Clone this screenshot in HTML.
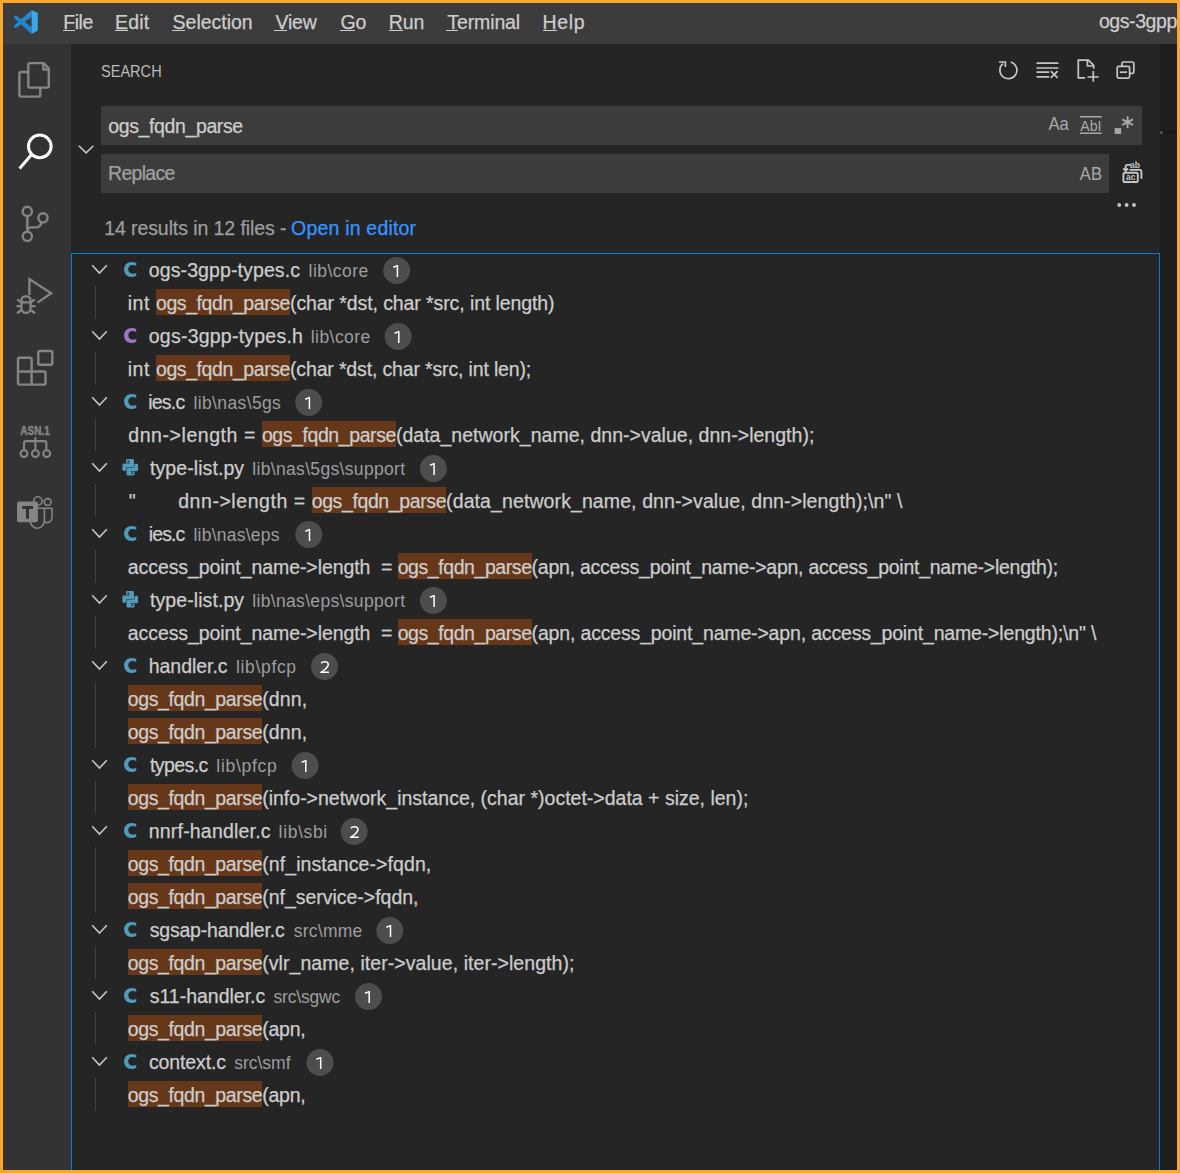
<!DOCTYPE html>
<html><head><meta charset="utf-8"><style>
html,body{margin:0;padding:0}
body{width:1180px;height:1173px;overflow:hidden;position:relative;background:#252526;font-family:'Liberation Sans', sans-serif}
.t{position:absolute;white-space:pre;line-height:normal;-webkit-text-stroke:0.25px currentColor}
u{text-decoration:none;border-bottom:0}
</style></head><body>
<!-- title bar -->
<div style="position:absolute;left:0;top:0;width:1180px;height:44px;background:#3c3c3c"></div>
<!-- activity bar -->
<div style="position:absolute;left:0;top:44px;width:71px;height:1129px;background:#333333"></div>
<!-- editor strip -->
<div style="position:absolute;left:1160px;top:44px;width:20px;height:1129px;background:#1e1e1e"></div>
<div style="position:absolute;left:1160px;top:130px;width:20px;height:4px;background:#191919"></div><div style="position:absolute;left:1160px;top:131px;width:3px;height:3px;background:#4a4a4a"></div>
<!-- inputs -->
<div style="position:absolute;left:101px;top:106px;width:1041px;height:39px;background:#3c3c3c"></div>
<div style="position:absolute;left:101px;top:154px;width:1008px;height:39px;background:#3c3c3c"></div>
<!-- tree focus border -->
<div style="position:absolute;left:71px;top:253px;width:1087px;height:1000px;border:1px solid #007fd4"></div>
<div style="position:absolute;left:156px;top:289px;width:134px;height:26px;background:#663819"></div><div style="position:absolute;left:156px;top:355px;width:134px;height:26px;background:#663819"></div><div style="position:absolute;left:262px;top:421px;width:134px;height:26px;background:#663819"></div><div style="position:absolute;left:312px;top:487px;width:134px;height:26px;background:#663819"></div><div style="position:absolute;left:398px;top:553px;width:134px;height:26px;background:#663819"></div><div style="position:absolute;left:398px;top:619px;width:134px;height:26px;background:#663819"></div><div style="position:absolute;left:128px;top:685px;width:134px;height:26px;background:#663819"></div><div style="position:absolute;left:128px;top:718px;width:134px;height:26px;background:#663819"></div><div style="position:absolute;left:128px;top:784px;width:134px;height:26px;background:#663819"></div><div style="position:absolute;left:128px;top:850px;width:134px;height:26px;background:#663819"></div><div style="position:absolute;left:128px;top:883px;width:134px;height:26px;background:#663819"></div><div style="position:absolute;left:128px;top:949px;width:134px;height:26px;background:#663819"></div><div style="position:absolute;left:128px;top:1015px;width:134px;height:26px;background:#663819"></div><div style="position:absolute;left:128px;top:1081px;width:134px;height:26px;background:#663819"></div>
<div style="position:absolute;left:95px;top:286px;width:1px;height:33px;background:#404040"></div><div style="position:absolute;left:95px;top:352px;width:1px;height:33px;background:#404040"></div><div style="position:absolute;left:95px;top:418px;width:1px;height:33px;background:#404040"></div><div style="position:absolute;left:95px;top:484px;width:1px;height:33px;background:#404040"></div><div style="position:absolute;left:95px;top:550px;width:1px;height:33px;background:#404040"></div><div style="position:absolute;left:95px;top:616px;width:1px;height:33px;background:#404040"></div><div style="position:absolute;left:95px;top:682px;width:1px;height:33px;background:#404040"></div><div style="position:absolute;left:95px;top:715px;width:1px;height:33px;background:#404040"></div><div style="position:absolute;left:95px;top:781px;width:1px;height:33px;background:#404040"></div><div style="position:absolute;left:95px;top:847px;width:1px;height:33px;background:#404040"></div><div style="position:absolute;left:95px;top:880px;width:1px;height:33px;background:#404040"></div><div style="position:absolute;left:95px;top:946px;width:1px;height:33px;background:#404040"></div><div style="position:absolute;left:95px;top:1012px;width:1px;height:33px;background:#404040"></div><div style="position:absolute;left:95px;top:1078px;width:1px;height:33px;background:#404040"></div>
<svg width="1180" height="1173" style="position:absolute;left:0;top:0">
<g fill="none" stroke="#c5c5c5" stroke-width="1.6"><path d="M92.2 265.2 L99.5 273.1 L106.8 265.2" /></g><path transform="translate(0,0)" fill="#519aba" d="M136.2,263.1 C134.8,262.3 133.3,261.96 131.7,261.96 C127.2,261.96 124.05,265 124.05,269.5 C124.05,274 127.2,277 131.7,277 C133.3,277 134.8,276.6 136.2,275.8 L136.2,273 C135.1,273.5 133.9,273.7 132.6,273.7 C130,273.7 128.2,272 128.2,269.3 C128.2,266.6 130,264.9 132.6,264.9 C133.9,264.9 135.1,265.3 136.2,266 Z"/><circle cx="396.7" cy="270.5" r="13.5" fill="#4d4d4d"/><g fill="none" stroke="#c5c5c5" stroke-width="1.6"><path d="M92.2 331.2 L99.5 339.1 L106.8 331.2" /></g><path transform="translate(0,66)" fill="#a074c4" d="M136.2,263.1 C134.8,262.3 133.3,261.96 131.7,261.96 C127.2,261.96 124.05,265 124.05,269.5 C124.05,274 127.2,277 131.7,277 C133.3,277 134.8,276.6 136.2,275.8 L136.2,273 C135.1,273.5 133.9,273.7 132.6,273.7 C130,273.7 128.2,272 128.2,269.3 C128.2,266.6 130,264.9 132.6,264.9 C133.9,264.9 135.1,265.3 136.2,266 Z"/><circle cx="398.1" cy="336.5" r="13.5" fill="#4d4d4d"/><g fill="none" stroke="#c5c5c5" stroke-width="1.6"><path d="M92.2 397.2 L99.5 405.1 L106.8 397.2" /></g><path transform="translate(0,132)" fill="#519aba" d="M136.2,263.1 C134.8,262.3 133.3,261.96 131.7,261.96 C127.2,261.96 124.05,265 124.05,269.5 C124.05,274 127.2,277 131.7,277 C133.3,277 134.8,276.6 136.2,275.8 L136.2,273 C135.1,273.5 133.9,273.7 132.6,273.7 C130,273.7 128.2,272 128.2,269.3 C128.2,266.6 130,264.9 132.6,264.9 C133.9,264.9 135.1,265.3 136.2,266 Z"/><circle cx="308.7" cy="402.5" r="13.5" fill="#4d4d4d"/><g fill="none" stroke="#c5c5c5" stroke-width="1.6"><path d="M92.2 463.2 L99.5 471.1 L106.8 463.2" /></g><g transform="translate(122.4,459.1)"><path fill="#519aba" d="M3.6,1.3 Q3.6,0 4.9,0 L10.3,0 Q11.6,0 11.6,1.3 L11.6,7.9 L5.0,7.9 Q3.6,7.9 3.6,9.3 L3.6,10.5 Q3.6,11.8 2.3,11.8 L1.3,11.8 Q0,11.8 0,10.5 L0,5.65 Q0,4.35 1.3,4.35 L3.6,4.35 Z"/><path fill="#519aba" d="M3.6,1.3 Q3.6,0 4.9,0 L10.3,0 Q11.6,0 11.6,1.3 L11.6,7.9 L5.0,7.9 Q3.6,7.9 3.6,9.3 L3.6,10.5 Q3.6,11.8 2.3,11.8 L1.3,11.8 Q0,11.8 0,10.5 L0,5.65 Q0,4.35 1.3,4.35 L3.6,4.35 Z" transform="rotate(180 7.85 8.2)"/><path d="M3.2,4.1 H7.6 M8.1,12.3 H12.5" stroke="#252526" stroke-width="0.6"/><circle cx="5.9" cy="2.3" r="0.85" fill="#252526"/><circle cx="9.8" cy="14.1" r="0.85" fill="#252526"/></g><circle cx="433.4" cy="468.5" r="13.5" fill="#4d4d4d"/><g fill="none" stroke="#c5c5c5" stroke-width="1.6"><path d="M92.2 529.2 L99.5 537.1 L106.8 529.2" /></g><path transform="translate(0,264)" fill="#519aba" d="M136.2,263.1 C134.8,262.3 133.3,261.96 131.7,261.96 C127.2,261.96 124.05,265 124.05,269.5 C124.05,274 127.2,277 131.7,277 C133.3,277 134.8,276.6 136.2,275.8 L136.2,273 C135.1,273.5 133.9,273.7 132.6,273.7 C130,273.7 128.2,272 128.2,269.3 C128.2,266.6 130,264.9 132.6,264.9 C133.9,264.9 135.1,265.3 136.2,266 Z"/><circle cx="308.8" cy="534.5" r="13.5" fill="#4d4d4d"/><g fill="none" stroke="#c5c5c5" stroke-width="1.6"><path d="M92.2 595.2 L99.5 603.1 L106.8 595.2" /></g><g transform="translate(122.4,591.1)"><path fill="#519aba" d="M3.6,1.3 Q3.6,0 4.9,0 L10.3,0 Q11.6,0 11.6,1.3 L11.6,7.9 L5.0,7.9 Q3.6,7.9 3.6,9.3 L3.6,10.5 Q3.6,11.8 2.3,11.8 L1.3,11.8 Q0,11.8 0,10.5 L0,5.65 Q0,4.35 1.3,4.35 L3.6,4.35 Z"/><path fill="#519aba" d="M3.6,1.3 Q3.6,0 4.9,0 L10.3,0 Q11.6,0 11.6,1.3 L11.6,7.9 L5.0,7.9 Q3.6,7.9 3.6,9.3 L3.6,10.5 Q3.6,11.8 2.3,11.8 L1.3,11.8 Q0,11.8 0,10.5 L0,5.65 Q0,4.35 1.3,4.35 L3.6,4.35 Z" transform="rotate(180 7.85 8.2)"/><path d="M3.2,4.1 H7.6 M8.1,12.3 H12.5" stroke="#252526" stroke-width="0.6"/><circle cx="5.9" cy="2.3" r="0.85" fill="#252526"/><circle cx="9.8" cy="14.1" r="0.85" fill="#252526"/></g><circle cx="433.4" cy="600.5" r="13.5" fill="#4d4d4d"/><g fill="none" stroke="#c5c5c5" stroke-width="1.6"><path d="M92.2 661.2 L99.5 669.1 L106.8 661.2" /></g><path transform="translate(0,396)" fill="#519aba" d="M136.2,263.1 C134.8,262.3 133.3,261.96 131.7,261.96 C127.2,261.96 124.05,265 124.05,269.5 C124.05,274 127.2,277 131.7,277 C133.3,277 134.8,276.6 136.2,275.8 L136.2,273 C135.1,273.5 133.9,273.7 132.6,273.7 C130,273.7 128.2,272 128.2,269.3 C128.2,266.6 130,264.9 132.6,264.9 C133.9,264.9 135.1,265.3 136.2,266 Z"/><circle cx="324.5" cy="666.5" r="13.5" fill="#4d4d4d"/><g fill="none" stroke="#c5c5c5" stroke-width="1.6"><path d="M92.2 760.2 L99.5 768.1 L106.8 760.2" /></g><path transform="translate(0,495)" fill="#519aba" d="M136.2,263.1 C134.8,262.3 133.3,261.96 131.7,261.96 C127.2,261.96 124.05,265 124.05,269.5 C124.05,274 127.2,277 131.7,277 C133.3,277 134.8,276.6 136.2,275.8 L136.2,273 C135.1,273.5 133.9,273.7 132.6,273.7 C130,273.7 128.2,272 128.2,269.3 C128.2,266.6 130,264.9 132.6,264.9 C133.9,264.9 135.1,265.3 136.2,266 Z"/><circle cx="305.1" cy="765.5" r="13.5" fill="#4d4d4d"/><g fill="none" stroke="#c5c5c5" stroke-width="1.6"><path d="M92.2 826.2 L99.5 834.1 L106.8 826.2" /></g><path transform="translate(0,561)" fill="#519aba" d="M136.2,263.1 C134.8,262.3 133.3,261.96 131.7,261.96 C127.2,261.96 124.05,265 124.05,269.5 C124.05,274 127.2,277 131.7,277 C133.3,277 134.8,276.6 136.2,275.8 L136.2,273 C135.1,273.5 133.9,273.7 132.6,273.7 C130,273.7 128.2,272 128.2,269.3 C128.2,266.6 130,264.9 132.6,264.9 C133.9,264.9 135.1,265.3 136.2,266 Z"/><circle cx="354.2" cy="831.5" r="13.5" fill="#4d4d4d"/><g fill="none" stroke="#c5c5c5" stroke-width="1.6"><path d="M92.2 925.2 L99.5 933.1 L106.8 925.2" /></g><path transform="translate(0,660)" fill="#519aba" d="M136.2,263.1 C134.8,262.3 133.3,261.96 131.7,261.96 C127.2,261.96 124.05,265 124.05,269.5 C124.05,274 127.2,277 131.7,277 C133.3,277 134.8,276.6 136.2,275.8 L136.2,273 C135.1,273.5 133.9,273.7 132.6,273.7 C130,273.7 128.2,272 128.2,269.3 C128.2,266.6 130,264.9 132.6,264.9 C133.9,264.9 135.1,265.3 136.2,266 Z"/><circle cx="389.8" cy="930.5" r="13.5" fill="#4d4d4d"/><g fill="none" stroke="#c5c5c5" stroke-width="1.6"><path d="M92.2 991.2 L99.5 999.1 L106.8 991.2" /></g><path transform="translate(0,726)" fill="#519aba" d="M136.2,263.1 C134.8,262.3 133.3,261.96 131.7,261.96 C127.2,261.96 124.05,265 124.05,269.5 C124.05,274 127.2,277 131.7,277 C133.3,277 134.8,276.6 136.2,275.8 L136.2,273 C135.1,273.5 133.9,273.7 132.6,273.7 C130,273.7 128.2,272 128.2,269.3 C128.2,266.6 130,264.9 132.6,264.9 C133.9,264.9 135.1,265.3 136.2,266 Z"/><circle cx="368.5" cy="996.5" r="13.5" fill="#4d4d4d"/><g fill="none" stroke="#c5c5c5" stroke-width="1.6"><path d="M92.2 1057.2 L99.5 1065.1 L106.8 1057.2" /></g><path transform="translate(0,792)" fill="#519aba" d="M136.2,263.1 C134.8,262.3 133.3,261.96 131.7,261.96 C127.2,261.96 124.05,265 124.05,269.5 C124.05,274 127.2,277 131.7,277 C133.3,277 134.8,276.6 136.2,275.8 L136.2,273 C135.1,273.5 133.9,273.7 132.6,273.7 C130,273.7 128.2,272 128.2,269.3 C128.2,266.6 130,264.9 132.6,264.9 C133.9,264.9 135.1,265.3 136.2,266 Z"/><circle cx="320" cy="1062.5" r="13.5" fill="#4d4d4d"/><path d="M393.20,267.20 L397.40,265.60 V277.00" fill="none" stroke="#ffffff" stroke-width="1.5" stroke-linejoin="round"/><path d="M394.60,333.20 L398.80,331.60 V343.00" fill="none" stroke="#ffffff" stroke-width="1.5" stroke-linejoin="round"/><path d="M305.20,399.20 L309.40,397.60 V409.00" fill="none" stroke="#ffffff" stroke-width="1.5" stroke-linejoin="round"/><path d="M429.90,465.20 L434.10,463.60 V475.00" fill="none" stroke="#ffffff" stroke-width="1.5" stroke-linejoin="round"/><path d="M305.30,531.20 L309.50,529.60 V541.00" fill="none" stroke="#ffffff" stroke-width="1.5" stroke-linejoin="round"/><path d="M429.90,597.20 L434.10,595.60 V607.00" fill="none" stroke="#ffffff" stroke-width="1.5" stroke-linejoin="round"/><path d="M321.10,663.20 C321.90,662.10 323.30,661.70 324.80,661.70 C327.10,661.70 328.30,663.00 328.30,664.60 C328.30,666.30 326.80,667.80 324.90,669.50 L321.00,672.40 V672.25 H329.00" fill="none" stroke="#ffffff" stroke-width="1.5" stroke-linejoin="round"/><path d="M301.60,762.20 L305.80,760.60 V772.00" fill="none" stroke="#ffffff" stroke-width="1.5" stroke-linejoin="round"/><path d="M350.80,828.20 C351.60,827.10 353.00,826.70 354.50,826.70 C356.80,826.70 358.00,828.00 358.00,829.60 C358.00,831.30 356.50,832.80 354.60,834.50 L350.70,837.40 V837.25 H358.70" fill="none" stroke="#ffffff" stroke-width="1.5" stroke-linejoin="round"/><path d="M386.30,927.20 L390.50,925.60 V937.00" fill="none" stroke="#ffffff" stroke-width="1.5" stroke-linejoin="round"/><path d="M365.00,993.20 L369.20,991.60 V1003.00" fill="none" stroke="#ffffff" stroke-width="1.5" stroke-linejoin="round"/><path d="M316.50,1059.20 L320.70,1057.60 V1069.00" fill="none" stroke="#ffffff" stroke-width="1.5" stroke-linejoin="round"/>
<g><path fill="#2587cc" d="M31.6 10.1 L31.6 16.9 L16.6 27.6 Q15.4 28.4 14.5 27.4 L14.1 26.9 Q13.5 26 14.4 25.3 Z"/><path fill="#1c87d6" d="M14.4 16.6 Q13.5 17.4 14.2 18.2 L14.6 18.6 L31.6 34 L31.6 27 L16.6 15.9 Q15.5 15.2 14.8 16.1 Z"/><path fill="#39a6f0" d="M31.6 10.1 L37.8 13.1 L37.8 30.6 L31.6 34 Z"/></g>
<g fill="none" stroke="#858585" stroke-width="2.4" stroke-linejoin="round"><path d="M29.8 63.1 L43.6 63.1 L48.8 68.3 L48.8 86.1 Q48.8 87.6 47.3 87.6 L29.8 87.6 Q28.3 87.6 28.3 86.1 L28.3 64.6 Q28.3 63.1 29.8 63.1 Z"/><path d="M43.3 63.1 L43.3 69.5 L48.8 69.5"/><path d="M28.3 72 L20.9 72 Q19.4 72 19.4 73.5 L19.4 95.1 Q19.4 96.6 20.9 96.6 L38.8 96.6 Q40.3 96.6 40.3 95.1 L40.3 87.6"/></g>
<g fill="none" stroke="#ffffff" stroke-width="3"><circle cx="39.8" cy="146.4" r="11.3"/><path d="M31.6 154.4 L19.6 168.4"/></g>
<g fill="none" stroke="#858585" stroke-width="2.4"><circle cx="27.3" cy="211.4" r="4.6"/><circle cx="27.3" cy="236.3" r="4.6"/><circle cx="43" cy="217.8" r="4.6"/><path d="M27.3 216 L27.3 231.7"/><path d="M41.6 222.2 C40.8 225.6 39.4 227.4 36 227.4 L31.5 227.4 C29 227.4 27.3 229 27.3 231.5"/></g>
<g fill="none" stroke="#858585" stroke-width="2.3" stroke-linejoin="miter"><path d="M29.4 294.9 L29.4 279 L51.2 293.2 L37.5 302.6"/><path d="M21.4 302.4 L21.4 300.8 C21.4 298 23.4 296.4 26 296.4 C28.6 296.4 30.6 298 30.6 300.8 L30.6 302.4 Z"/><path d="M21.4 302.4 L21.4 307.5 C21.4 310.8 23.4 312.9 26 312.9 C28.6 312.9 30.6 310.8 30.6 307.5 L30.6 302.4"/><path d="M16.5 306.2 L21.4 306.2 M30.6 306.2 L35.5 306.2 M17.3 299.3 L21.6 302.6 M34.7 299.3 L30.4 302.6 M17 313.2 L21.8 309.8 M35 313.2 L30.2 309.8"/></g>
<g fill="none" stroke="#858585" stroke-width="2.4" stroke-linejoin="round"><path d="M19.5 357.8 L30.1 357.8 Q31.6 357.8 31.6 359.3 L31.6 371.5 L44 371.5 Q45.5 371.5 45.5 373 L45.5 383.1 Q45.5 384.6 44 384.6 L19.5 384.6 Q18 384.6 18 383.1 L18 359.3 Q18 357.8 19.5 357.8 Z"/><path d="M18 371.5 L31.6 371.5 L31.6 384.6"/><rect x="38.3" y="351" width="14" height="13.8" rx="1.5"/></g>
<text x="35" y="435" text-anchor="middle" font-family="Liberation Sans" font-weight="bold" font-size="12.5" fill="#858585" stroke="#858585" stroke-width="0.5" textLength="29.4" lengthAdjust="spacingAndGlyphs">ASN.1</text>
<g fill="none" stroke="#858585" stroke-width="2.1"><path d="M35.4 437.2 L35.4 449.2 M24 449.2 L24 443.3 Q24 441.1 26.2 441.1 L44.2 441.1 Q46.4 441.1 46.4 443.3 L46.4 449.2"/><circle cx="24" cy="453.6" r="3.5"/><circle cx="35.4" cy="453.6" r="3.5"/><circle cx="46.7" cy="453.6" r="3.5"/></g>
<g fill="none" stroke="#858585" stroke-width="1.6"><circle cx="37.9" cy="501" r="4.2"/><circle cx="47.7" cy="502" r="3.4"/><path d="M30.2 508.2 L44.4 508.2 L44.4 520.5 C44.4 525 41 528.2 37.3 528.2 C33.6 528.2 30.2 525 30.2 521"/><path d="M44.6 508.2 L52 508.2 L52 517 C52 520 50 522.6 47 522.6 C45.8 522.6 44.9 522.3 44.4 521.8"/></g>
<rect x="17" y="501.6" width="20.9" height="20.7" rx="2" fill="#858585"/>
<path fill="#333333" d="M22.1 505.9 H33 V508.9 H29 V518.7 H26 V508.9 H22.1 Z"/>
<g fill="none" stroke="#c5c5c5" stroke-width="1.7"><path d="M1010.74 62.03 A 8.5 8.5 0 1 1 1002.94 63.69"/><path d="M999 62 L1005.4 62 L1005.4 67"/><path d="M1036.5 63.1 H1058.4 M1036.5 68 H1058.4 M1036.5 72.1 H1049.2 M1036.5 76.9 H1049.2 M1050.8 71.2 L1057.6 77.8 M1057.6 71.2 L1050.8 77.8"/><path d="M1085.1 77.8 L1078.3 77.8 L1078.3 60.2 L1088.4 60.2 L1093.7 65.3 L1093.7 68.8"/><path d="M1087.4 60.2 L1087.4 66 L1093.7 66"/><path d="M1087.5 77 H1098.8 M1093.3 71 V81.7"/><path d="M1121.9 66.3 V63.5 Q1121.9 62 1123.4 62 H1132.3 Q1133.8 62 1133.8 63.5 V71.9 Q1133.8 73.4 1132.3 73.4 H1129.6"/><rect x="1117.2" y="66.3" width="12.4" height="11.8" rx="1.5"/><path d="M1119.8 72.2 H1127"/></g>
<path d="M78.8 145.8 L86.1 152.9 L93.4 145.8" fill="none" stroke="#c5c5c5" stroke-width="1.6"/>
<g fill="none" stroke="#c5c5c5" stroke-width="1.9"><rect x="1123.4" y="172.8" width="14.4" height="9.2" rx="1.6"/><path d="M1129.5 169.9 H1139.8 Q1141.4 169.9 1141.4 171.5 V178.8"/><path d="M1131 164.9 H1127.5 Q1125.6 164.9 1125.6 167 V170.5"/><path d="M1123.3 168.4 L1125.6 170.8 L1128 168.4"/></g>
<text x="1130.8" y="180.3" text-anchor="middle" font-family="Liberation Sans" font-weight="bold" font-size="8.5" fill="#c5c5c5">ac</text>
<text x="1135" y="167.9" text-anchor="middle" font-family="Liberation Sans" font-weight="bold" font-size="8.5" fill="#c5c5c5">ab</text>
<g fill="#c5c5c5"><circle cx="1119.2" cy="205" r="1.9"/><circle cx="1126.6" cy="205" r="1.9"/><circle cx="1134" cy="205" r="1.9"/></g>
<text x="1048.4" y="130.4" font-family="Liberation Sans" font-size="18.5" fill="#a9a9a9" textLength="20.4" lengthAdjust="spacingAndGlyphs">Aa</text>
<text x="1080.3" y="131.2" font-family="Liberation Sans" font-size="15.5" fill="#a9a9a9" textLength="21.2" lengthAdjust="spacingAndGlyphs">AbI</text>
<path d="M1080 116.8 H1101.8 M1080 133.2 H1101.8" stroke="#a9a9a9" stroke-width="1.4"/>
<rect x="1114.6" y="128.1" width="6.5" height="5.8" fill="#a9a9a9"/>
<g stroke="#a9a9a9" stroke-width="1.9"><path d="M1127.6 116.2 V128 M1122.3 119.3 L1132.9 124.9 M1132.9 119.3 L1122.3 124.9"/></g>
<text x="1079.8" y="179.8" font-family="Liberation Sans" font-size="17.8" fill="#a9a9a9" textLength="22.2" lengthAdjust="spacingAndGlyphs">AB</text>
</svg>

<div style="position:absolute;left:63.2px;top:30px;width:11.5px;height:1.2px;background:#cccccc"></div><div class="t" style="left:63.18px;top:11.15px;font-size:19.5px;letter-spacing:-0.436px;color:#cccccc">File</div><div style="position:absolute;left:114.9px;top:30px;width:13.3px;height:1.2px;background:#cccccc"></div><div class="t" style="left:114.88px;top:11.15px;font-size:19.5px;letter-spacing:0.252px;color:#cccccc">Edit</div><div style="position:absolute;left:171.7px;top:30px;width:13.0px;height:1.2px;background:#cccccc"></div><div class="t" style="left:172.59px;top:11.15px;font-size:19.5px;letter-spacing:-0.014px;color:#cccccc">Selection</div><div style="position:absolute;left:274.1px;top:30px;width:12.8px;height:1.2px;background:#cccccc"></div><div class="t" style="left:275.60px;top:11.15px;font-size:19.5px;letter-spacing:-0.251px;color:#cccccc">View</div><div style="position:absolute;left:339.8px;top:30px;width:15.2px;height:1.2px;background:#cccccc"></div><div class="t" style="left:340.39px;top:11.15px;font-size:19.5px;letter-spacing:-0.008px;color:#cccccc">Go</div><div style="position:absolute;left:388.7px;top:30px;width:14.0px;height:1.2px;background:#cccccc"></div><div class="t" style="left:388.68px;top:11.15px;font-size:19.5px;letter-spacing:-0.077px;color:#cccccc">Run</div><div style="position:absolute;left:446.1px;top:30px;width:11.8px;height:1.2px;background:#cccccc"></div><div class="t" style="left:447.30px;top:11.15px;font-size:19.5px;letter-spacing:-0.114px;color:#cccccc">Terminal</div><div style="position:absolute;left:542.5px;top:30px;width:14.8px;height:1.2px;background:#cccccc"></div><div class="t" style="left:542.48px;top:11.15px;font-size:19.5px;letter-spacing:0.670px;color:#cccccc">Help</div><div class="t" style="left:1098.89px;top:10.35px;font-size:19.5px;letter-spacing:-0.416px;color:#cccccc">ogs-3gpp</div><div class="t" style="left:100.55px;top:61.62px;font-size:17px;letter-spacing:0.000px;color:#bbbbbb;transform:scaleX(0.8559);transform-origin:0 0;-webkit-text-stroke:0">SEARCH</div><div class="t" style="left:108.29px;top:115.35px;font-size:19.5px;letter-spacing:-0.382px;color:#cccccc">ogs_fqdn_parse</div><div class="t" style="left:108.08px;top:162.15px;font-size:19.5px;letter-spacing:-0.705px;color:#a0a0a0">Replace</div><div class="t" style="left:104.18px;top:217.35px;font-size:19.5px;letter-spacing:-0.084px;color:#9d9d9d">14 results in 12 files -</div><div class="t" style="left:291.09px;top:217.35px;font-size:19.5px;letter-spacing:0.193px;color:#3794ff">Open in editor</div><div class="t" style="left:128.69px;top:489.55px;font-size:19.5px;letter-spacing:0.000px;color:#cccccc">"</div><div class="t" style="left:148.79px;top:258.55px;font-size:19.5px;letter-spacing:0.109px;color:#cccccc">ogs-3gpp-types.c</div><div class="t" style="left:308.61px;top:261.06px;font-size:17.5px;letter-spacing:0.456px;color:#9d9d9d;-webkit-text-stroke:0">lib\core</div><div class="t" style="left:148.79px;top:324.55px;font-size:19.5px;letter-spacing:0.228px;color:#cccccc">ogs-3gpp-types.h</div><div class="t" style="left:310.71px;top:327.06px;font-size:17.5px;letter-spacing:0.456px;color:#9d9d9d;-webkit-text-stroke:0">lib\core</div><div class="t" style="left:148.18px;top:390.55px;font-size:19.5px;letter-spacing:-0.768px;color:#cccccc">ies.c</div><div class="t" style="left:193.51px;top:393.06px;font-size:17.5px;letter-spacing:0.368px;color:#9d9d9d;-webkit-text-stroke:0">lib\nas\5gs</div><div class="t" style="left:150.00px;top:456.55px;font-size:19.5px;letter-spacing:0.082px;color:#cccccc">type-list.py</div><div class="t" style="left:252.21px;top:459.06px;font-size:17.5px;letter-spacing:0.335px;color:#9d9d9d;-webkit-text-stroke:0">lib\nas\5gs\support</div><div class="t" style="left:148.78px;top:522.55px;font-size:19.5px;letter-spacing:-0.893px;color:#cccccc">ies.c</div><div class="t" style="left:193.41px;top:525.06px;font-size:17.5px;letter-spacing:0.248px;color:#9d9d9d;-webkit-text-stroke:0">lib\nas\eps</div><div class="t" style="left:150.00px;top:588.55px;font-size:19.5px;letter-spacing:0.082px;color:#cccccc">type-list.py</div><div class="t" style="left:252.21px;top:591.06px;font-size:17.5px;letter-spacing:0.335px;color:#9d9d9d;-webkit-text-stroke:0">lib\nas\eps\support</div><div class="t" style="left:148.78px;top:654.55px;font-size:19.5px;letter-spacing:-0.052px;color:#cccccc">handler.c</div><div class="t" style="left:235.91px;top:657.06px;font-size:17.5px;letter-spacing:0.679px;color:#9d9d9d;-webkit-text-stroke:0">lib\pfcp</div><div class="t" style="left:150.00px;top:753.55px;font-size:19.5px;letter-spacing:-0.595px;color:#cccccc">types.c</div><div class="t" style="left:216.31px;top:756.06px;font-size:17.5px;letter-spacing:0.722px;color:#9d9d9d;-webkit-text-stroke:0">lib\pfcp</div><div class="t" style="left:148.78px;top:819.55px;font-size:19.5px;letter-spacing:0.191px;color:#cccccc">nnrf-handler.c</div><div class="t" style="left:278.61px;top:822.06px;font-size:17.5px;letter-spacing:0.634px;color:#9d9d9d;-webkit-text-stroke:0">lib\sbi</div><div class="t" style="left:149.70px;top:918.55px;font-size:19.5px;letter-spacing:-0.190px;color:#cccccc">sgsap-handler.c</div><div class="t" style="left:293.63px;top:921.06px;font-size:17.5px;letter-spacing:0.268px;color:#9d9d9d;-webkit-text-stroke:0">src\mme</div><div class="t" style="left:149.70px;top:984.55px;font-size:19.5px;letter-spacing:-0.010px;color:#cccccc">s11-handler.c</div><div class="t" style="left:273.53px;top:987.06px;font-size:17.5px;letter-spacing:-0.202px;color:#9d9d9d;-webkit-text-stroke:0">src\sgwc</div><div class="t" style="left:148.89px;top:1050.55px;font-size:19.5px;letter-spacing:-0.103px;color:#cccccc">context.c</div><div class="t" style="left:234.13px;top:1053.06px;font-size:17.5px;letter-spacing:0.006px;color:#9d9d9d;-webkit-text-stroke:0">src\smf</div><div class="t" style="left:127.68px;top:291.55px;font-size:19.5px;letter-spacing:0.577px;color:#cccccc">int </div><div class="t" style="left:156.00px;top:291.55px;font-size:19.5px;letter-spacing:-0.419px;color:#cccccc">ogs_fqdn_parse</div><div class="t" style="left:290.00px;top:291.55px;font-size:19.5px;letter-spacing:-0.093px;color:#cccccc">(char *dst, char *src, int length)</div><div class="t" style="left:127.68px;top:357.55px;font-size:19.5px;letter-spacing:0.577px;color:#cccccc">int </div><div class="t" style="left:156.00px;top:357.55px;font-size:19.5px;letter-spacing:-0.419px;color:#cccccc">ogs_fqdn_parse</div><div class="t" style="left:290.00px;top:357.55px;font-size:19.5px;letter-spacing:-0.153px;color:#cccccc">(char *dst, char *src, int len);</div><div class="t" style="left:128.29px;top:423.55px;font-size:19.5px;letter-spacing:0.560px;color:#cccccc">dnn-&gt;length = </div><div class="t" style="left:261.90px;top:423.55px;font-size:19.5px;letter-spacing:-0.419px;color:#cccccc">ogs_fqdn_parse</div><div class="t" style="left:395.90px;top:423.55px;font-size:19.5px;letter-spacing:0.025px;color:#cccccc">(data_network_name, dnn-&gt;value, dnn-&gt;length);</div><div class="t" style="left:178.19px;top:489.55px;font-size:19.5px;letter-spacing:0.553px;color:#cccccc">dnn-&gt;length = </div><div class="t" style="left:311.70px;top:489.55px;font-size:19.5px;letter-spacing:-0.390px;color:#cccccc">ogs_fqdn_parse</div><div class="t" style="left:446.10px;top:489.55px;font-size:19.5px;letter-spacing:0.101px;color:#cccccc">(data_network_name, dnn-&gt;value, dnn-&gt;length);\n" \</div><div class="t" style="left:127.79px;top:555.55px;font-size:19.5px;letter-spacing:-0.075px;color:#cccccc">access_point_name-&gt;length  = </div><div class="t" style="left:397.70px;top:555.55px;font-size:19.5px;letter-spacing:-0.426px;color:#cccccc">ogs_fqdn_parse</div><div class="t" style="left:531.60px;top:555.55px;font-size:19.5px;letter-spacing:-0.257px;color:#cccccc">(apn, access_point_name-&gt;apn, access_point_name-&gt;length);</div><div class="t" style="left:127.79px;top:621.55px;font-size:19.5px;letter-spacing:-0.075px;color:#cccccc">access_point_name-&gt;length  = </div><div class="t" style="left:397.70px;top:621.55px;font-size:19.5px;letter-spacing:-0.426px;color:#cccccc">ogs_fqdn_parse</div><div class="t" style="left:531.60px;top:621.55px;font-size:19.5px;letter-spacing:-0.167px;color:#cccccc">(apn, access_point_name-&gt;apn, access_point_name-&gt;length);\n" \</div><div class="t" style="left:127.80px;top:687.55px;font-size:19.5px;letter-spacing:-0.390px;color:#cccccc">ogs_fqdn_parse</div><div class="t" style="left:262.20px;top:687.55px;font-size:19.5px;letter-spacing:0.153px;color:#cccccc">(dnn,</div><div class="t" style="left:127.80px;top:720.55px;font-size:19.5px;letter-spacing:-0.390px;color:#cccccc">ogs_fqdn_parse</div><div class="t" style="left:262.20px;top:720.55px;font-size:19.5px;letter-spacing:0.153px;color:#cccccc">(dnn,</div><div class="t" style="left:127.80px;top:786.55px;font-size:19.5px;letter-spacing:-0.390px;color:#cccccc">ogs_fqdn_parse</div><div class="t" style="left:262.20px;top:786.55px;font-size:19.5px;letter-spacing:0.001px;color:#cccccc">(info-&gt;network_instance, (char *)octet-&gt;data + size, len);</div><div class="t" style="left:127.80px;top:852.55px;font-size:19.5px;letter-spacing:-0.390px;color:#cccccc">ogs_fqdn_parse</div><div class="t" style="left:262.20px;top:852.55px;font-size:19.5px;letter-spacing:0.087px;color:#cccccc">(nf_instance-&gt;fqdn,</div><div class="t" style="left:127.80px;top:885.55px;font-size:19.5px;letter-spacing:-0.390px;color:#cccccc">ogs_fqdn_parse</div><div class="t" style="left:262.20px;top:885.55px;font-size:19.5px;letter-spacing:-0.021px;color:#cccccc">(nf_service-&gt;fqdn,</div><div class="t" style="left:127.80px;top:951.55px;font-size:19.5px;letter-spacing:-0.390px;color:#cccccc">ogs_fqdn_parse</div><div class="t" style="left:262.20px;top:951.55px;font-size:19.5px;letter-spacing:0.062px;color:#cccccc">(vlr_name, iter-&gt;value, iter-&gt;length);</div><div class="t" style="left:127.80px;top:1017.55px;font-size:19.5px;letter-spacing:-0.390px;color:#cccccc">ogs_fqdn_parse</div><div class="t" style="left:262.20px;top:1017.55px;font-size:19.5px;letter-spacing:-0.222px;color:#cccccc">(apn,</div><div class="t" style="left:127.80px;top:1083.55px;font-size:19.5px;letter-spacing:-0.390px;color:#cccccc">ogs_fqdn_parse</div><div class="t" style="left:262.20px;top:1083.55px;font-size:19.5px;letter-spacing:-0.222px;color:#cccccc">(apn,</div>
<!-- orange frame -->
<div style="position:absolute;left:0;top:0;width:1174px;height:1167px;border:3px solid #f9a82b"></div>
</body></html>
